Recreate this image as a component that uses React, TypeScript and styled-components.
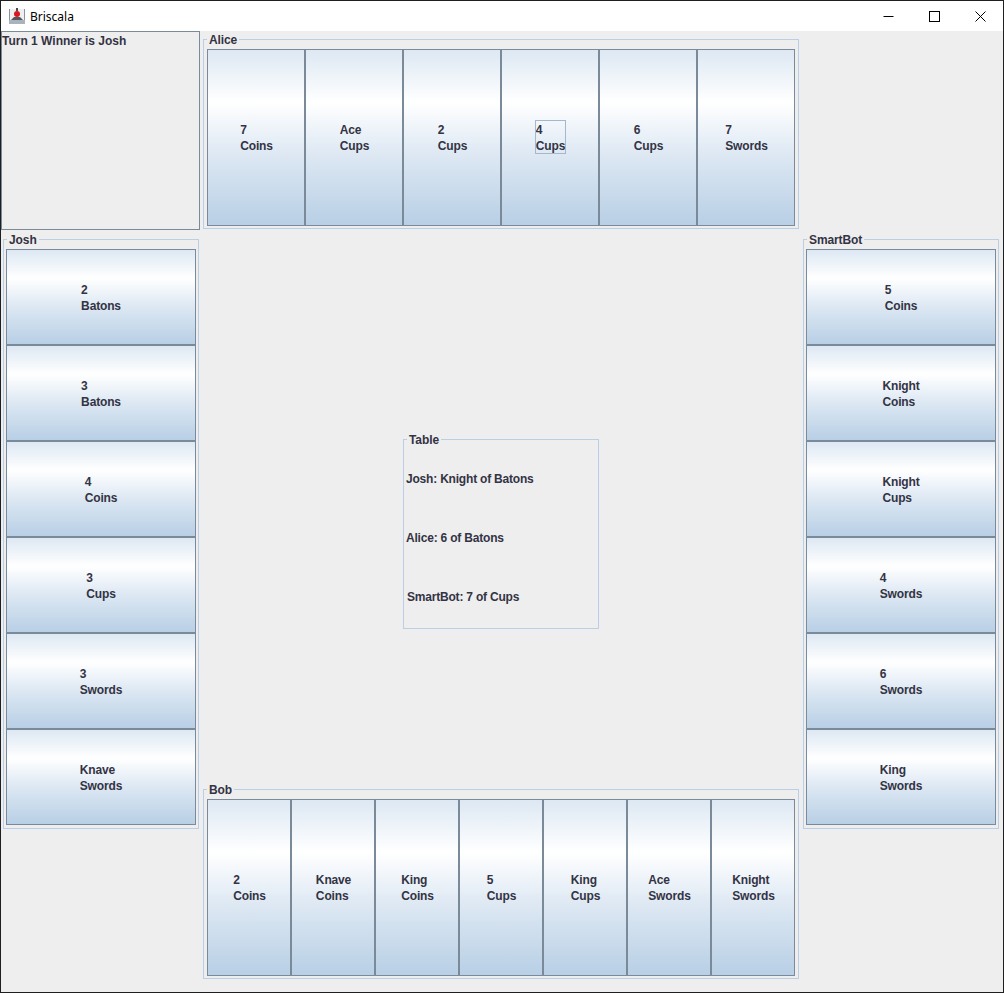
import React from 'react';
import styled, { createGlobalStyle } from 'styled-components';

const GlobalStyle = createGlobalStyle`
  html, body {
    margin: 0;
    padding: 0;
    background: #eeeeee;
  }

  * {
    box-sizing: border-box;
  }
`;

const Window = styled.div`
  border: 1px solid #1f1f1f;
  display: flex;
  flex-direction: column;
  height: 993px;
  width: 1004px;
`;

const TitleBar = styled.div`
  align-items: center;
  background-color: #fff;
  display: flex;
  flex: none;
  height: 30px;
  padding-left: 8px;
`;

const AppIcon = styled.svg`
  flex: none;
  height: 16px;
  margin-right: 5px;
  width: 16px;
`;

const WindowTitle = styled.span`
  color: #000;
  flex: 1;
  font-family: "Noto Sans", sans-serif;
  font-size: 12px;
`;

const WindowButton = styled.div`
  align-items: center;
  display: flex;
  height: 30px;
  justify-content: center;
  width: 46px;

  svg {
    display: block;
    height: 11px;
    width: 11px;
  }
`;

const Board = styled.div`
  background-color: #eeeeee;
  color: #333344;
  column-gap: 4px;
  display: grid;
  flex: 1;
  font-family: "Liberation Sans", Arial, sans-serif;
  font-size: 12px;
  font-weight: bold;
  grid-template-columns: 196px 596px 196px;
  grid-template-rows: 201px 550px 1fr;
  padding-left: 2px;
`;

const StatusBox = styled.div`
  border: 1px solid #7a8a99;
  grid-column: 1;
  grid-row: 1;
  height: 199px;
  line-height: 16px;
  margin-left: -2px;
  padding-top: 1px;
  width: 199px;
`;

const Group = styled.fieldset`
  align-self: start;
  border: 1px solid #b8cfe5;
  margin: 0;
  min-width: 0;
  padding: 2px;
`;

const GroupTitle = styled.legend`
  font-weight: bold;
  letter-spacing: -0.1px;
  line-height: 14px;
  margin-left: 1px;
  padding: 1px 2px 0;
`;

const TopGroup = styled(Group)`
  grid-column: 2;
  grid-row: 1;
  margin-top: 1px;
  padding: 2px 3px;

  ${GroupTitle} {
    margin-left: 0;
  }
`;

const LeftGroup = styled(Group)`
  grid-column: 1;
  grid-row: 2 / span 2;
  padding-bottom: 3px;
`;

const RightGroup = styled(Group)`
  grid-column: 3;
  grid-row: 2 / span 2;
  padding-bottom: 3px;
`;

const BottomGroup = styled(Group)`
  grid-column: 2;
  grid-row: 3;
  padding: 2px 3px;

  ${GroupTitle} {
    margin-left: 0;
  }
`;

const TableGroup = styled(Group)`
  grid-column: 2;
  grid-row: 2;
  justify-self: center;
  margin-top: 200px;
  width: 196px;
`;

const TableRows = styled.div`
  align-items: center;
  display: grid;
  grid-template-rows: repeat(3, 59px);
  letter-spacing: -0.2px;

  span:last-child {
    margin-left: 1px;
  }
`;

const Hand = styled.div<{ $vertical?: boolean }>`
  display: flex;
  flex-direction: ${(props) => (props.$vertical ? 'column' : 'row')};
  height: ${(props) => (props.$vertical ? '576px' : '177px')};
`;

const CardButton = styled.button<{ $vertical?: boolean }>`
  align-items: center;
  background: linear-gradient(
    to bottom,
    #dde8f3 0%,
    #ffffff 30%,
    #dde8f3 60%,
    #b8cfe5 100%
  );
  border: 1px solid #7a8a99;
  color: inherit;
  display: flex;
  flex: 1;
  font: inherit;
  justify-content: center;
  padding: ${(props) => (props.$vertical ? '2px 0 0' : '0 0 0 1px')};
`;

const CardLabel = styled.span<{ $focused?: boolean }>`
  display: block;
  letter-spacing: -0.15px;
  line-height: 16px;
  text-align: left;

  ${(props) =>
    props.$focused &&
    `
    height: 32px;
    margin-bottom: 2px;
    outline: 1px solid #a3b8cc;
    padding-top: 1px;
  `}
`;

type Card = { rank: string; suit: string; focused?: boolean };

const alice: Card[] = [
  { rank: '7', suit: 'Coins' },
  { rank: 'Ace', suit: 'Cups' },
  { rank: '2', suit: 'Cups' },
  { rank: '4', suit: 'Cups', focused: true },
  { rank: '6', suit: 'Cups' },
  { rank: '7', suit: 'Swords' },
];

const josh: Card[] = [
  { rank: '2', suit: 'Batons' },
  { rank: '3', suit: 'Batons' },
  { rank: '4', suit: 'Coins' },
  { rank: '3', suit: 'Cups' },
  { rank: '3', suit: 'Swords' },
  { rank: 'Knave', suit: 'Swords' },
];

const smartBot: Card[] = [
  { rank: '5', suit: 'Coins' },
  { rank: 'Knight', suit: 'Coins' },
  { rank: 'Knight', suit: 'Cups' },
  { rank: '4', suit: 'Swords' },
  { rank: '6', suit: 'Swords' },
  { rank: 'King', suit: 'Swords' },
];

const bob: Card[] = [
  { rank: '2', suit: 'Coins' },
  { rank: 'Knave', suit: 'Coins' },
  { rank: 'King', suit: 'Coins' },
  { rank: '5', suit: 'Cups' },
  { rank: 'King', suit: 'Cups' },
  { rank: 'Ace', suit: 'Swords' },
  { rank: 'Knight', suit: 'Swords' },
];

const tablePlays = ['Josh: Knight of Batons', 'Alice: 6 of Batons', 'SmartBot: 7 of Cups'];

const Cards: React.FC<{ cards: Card[]; vertical?: boolean }> = ({ cards, vertical }) => (
  <Hand $vertical={vertical}>
    {cards.map((card) => (
      <CardButton key={`${card.rank}-${card.suit}`} $vertical={vertical}>
        <CardLabel $focused={card.focused}>
          {card.rank}
          <br />
          {card.suit}
        </CardLabel>
      </CardButton>
    ))}
  </Hand>
);

const App: React.FC = () => (
  <>
    <GlobalStyle />
    <Window>
      <TitleBar>
        <AppIcon viewBox="0 0 16 16">
          <rect x="0" y="1" width="16" height="15" fill="#eef0f3" />
          <rect x="0" y="1" width="1" height="15" fill="#8f949b" />
          <rect x="15" y="1" width="1" height="15" fill="#8f949b" />
          <rect x="0" y="12" width="16" height="4" fill="#a9b2bd" />
          <path d="M2 12 L5 9 H11 L14 12 Z" fill="#55565c" />
          <path d="M7 0 H9 L9 3 H7 Z" fill="#4a4a50" />
          <circle cx="8" cy="6" r="3" fill="#e0141c" />
        </AppIcon>
        <WindowTitle>Briscala</WindowTitle>
        <WindowButton>
          <svg viewBox="0 0 11 11">
            <path d="M0.5 5.5 H10.5" stroke="#000" strokeWidth="1" fill="none" />
          </svg>
        </WindowButton>
        <WindowButton>
          <svg viewBox="0 0 11 11">
            <rect x="0.5" y="0.5" width="10" height="10" stroke="#000" strokeWidth="1" fill="none" />
          </svg>
        </WindowButton>
        <WindowButton>
          <svg viewBox="0 0 11 11">
            <path d="M0.5 0.5 L10.5 10.5 M10.5 0.5 L0.5 10.5" stroke="#000" strokeWidth="1" fill="none" />
          </svg>
        </WindowButton>
      </TitleBar>
      <Board>
        <StatusBox>Turn 1 Winner is Josh</StatusBox>
        <TopGroup>
          <GroupTitle>Alice</GroupTitle>
          <Cards cards={alice} />
        </TopGroup>
        <LeftGroup>
          <GroupTitle>Josh</GroupTitle>
          <Cards cards={josh} vertical />
        </LeftGroup>
        <TableGroup>
          <GroupTitle>Table</GroupTitle>
          <TableRows>
            {tablePlays.map((play) => (
              <span key={play}>{play}</span>
            ))}
          </TableRows>
        </TableGroup>
        <RightGroup>
          <GroupTitle>SmartBot</GroupTitle>
          <Cards cards={smartBot} vertical />
        </RightGroup>
        <BottomGroup>
          <GroupTitle>Bob</GroupTitle>
          <Cards cards={bob} />
        </BottomGroup>
      </Board>
    </Window>
  </>
);

export default App;
